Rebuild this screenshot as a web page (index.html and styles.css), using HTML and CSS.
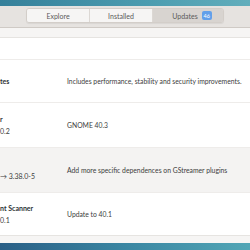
FILE: index.html
```html
<!DOCTYPE html>
<html lang="en">
<head>
    <meta charset="UTF-8">
    <title>Software - Updates</title>
    <link rel="stylesheet" href="styles.css">
</head>
<body>
    <div class="wall top"></div>

    <div class="header">
        <div class="tabs">
            <div class="tab">Explore</div>
            <div class="tab">Installed</div>
            <div class="tab active">Updates <span class="badge">46</span></div>
        </div>
    </div>

    <div class="content">
        <div class="list">
            <div class="row first">
                <div class="app"></div>
                <div class="desc"></div>
            </div>
            <div class="row">
                <div class="app">
                    <div class="name">tes</div>
                </div>
                <div class="desc">Includes performance, stability and security improvements.</div>
            </div>
            <div class="row tall">
                <div class="app">
                    <div class="name">r</div>
                    <div class="version">0.2</div>
                </div>
                <div class="desc">GNOME 40.3</div>
            </div>
            <div class="row tall hover">
                <div class="app">
                    <div class="name">&nbsp;</div>
                    <div class="version">→ 3.38.0-5</div>
                </div>
                <div class="desc">Add more specific dependences on GStreamer plugins</div>
            </div>
            <div class="row">
                <div class="app">
                    <div class="name">nt Scanner</div>
                    <div class="version">0.1</div>
                </div>
                <div class="desc">Update to 40.1</div>
            </div>
        </div>
    </div>

    <div class="wall bottom"></div>
</body>
</html>
```

FILE: styles.css
```css
body {
    margin: 0;
    width: 250px;
    height: 250px;
    overflow: hidden;
    font-family: "Lato", "Noto Sans", sans-serif;
    background-color: #f6f5f4;
}

.wall {
    background: linear-gradient(90deg, #35809a, #4c9db0 60%, #62aebc);
}

.wall.top {
    height: 6px;
}

.wall.bottom {
    height: 7px;
    background: linear-gradient(90deg, #2a5f86, #3a86a2 50%, #52a6b6);
}

.header {
    height: 22px;
    background-color: #e6e3e0;
    border-bottom: 1px solid #cfcac5;
    display: flex;
    justify-content: center;
    align-items: flex-start;
    padding-top: 2px;
    box-sizing: border-box;
}

.tabs {
    display: flex;
    width: 198px;
    height: 15px;
    border: 1px solid #d3cec9;
    border-radius: 3px;
    box-sizing: border-box;
    overflow: hidden;
    box-shadow: 0 1px 1px rgba(0,0,0,0.06);
}

.tab {
    flex: 1;
    display: flex;
    justify-content: center;
    align-items: center;
    gap: 4px;
    font-size: 7px;
    color: #5a5a5a;
    background-color: #f6f5f4;
    border-left: 1px solid #dcd8d4;
}

.tab:first-child {
    border-left: none;
}

.tab.active {
    background-color: #d8d4d0;
    padding-left: 8px;
}

.badge {
    background-color: #62a0ea;
    color: #fff;
    font-size: 5.5px;
    width: 10px;
    height: 9px;
    border-radius: 2px;
    display: flex;
    justify-content: center;
    align-items: center;
}

.content {
    height: 215px;
    padding-top: 9px;
    box-sizing: border-box;
}

.list {
    background-color: #fff;
    border-top: 1px solid #e6e4e1;
    border-bottom: 1px solid #e6e4e1;
}

.row {
    display: grid;
    grid-template-columns: 67px 1fr;
    align-items: center;
    height: 43px;
    border-top: 1px solid #eeecea;
    box-sizing: border-box;
}

.row.first {
    height: 21px;
    border-top: none;
}

.row.tall {
    height: 45px;
}

.row.hover {
    background-color: #f4f3f2;
}

.name {
    font-size: 7px;
    font-weight: bold;
    color: #2e3436;
    line-height: 12px;
    white-space: nowrap;
}

.version {
    font-size: 7px;
    color: #3d3d3d;
    line-height: 12px;
    white-space: nowrap;
}

.desc {
    font-size: 6.8px;
    color: #3d3d3d;
    white-space: nowrap;
}
```
